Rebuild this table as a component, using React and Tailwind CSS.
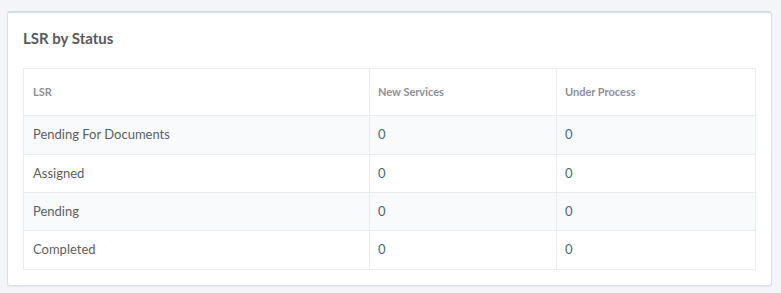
export default function App() {
  const rows = [
    ["Pending For Documents", "h-[39px] bg-[#f9fafb]"],
    ["Assigned", "h-[38px] bg-white"],
    ["Pending", "h-[38px] bg-[#f9fafb]"],
    ["Completed", "h-[39px] bg-white"],
  ];
  return (
    <div className="w-[781px] h-[293px] bg-[#f3f5f8] pt-[11px] pl-[7px] font-['Lato','Open_Sans',sans-serif]">
      <div className="w-[765px] h-[275px] bg-white rounded-[3px] border border-[#dde2e8] border-t-2 border-t-[#d2dae2] shadow-[0_1px_1px_rgba(0,0,0,0.05)] px-[15px]">
        <h2 className="h-[55px] pt-[15px] text-[15px] leading-[20px] font-bold text-[#565a60]">LSR by Status</h2>
        <table className="w-[732px] border-collapse table-fixed">
          <colgroup>
            <col className="w-[346px]" />
            <col className="w-[187px]" />
            <col className="w-[199px]" />
          </colgroup>
          <thead>
            <tr className="h-[47px]">
              <th className="border border-[#e9ecef] text-left pl-[9px] text-[11px] font-bold text-[#8b9099]">LSR</th>
              <th className="border border-[#e9ecef] text-left pl-[8px] text-[11px] font-bold text-[#8b9099]">New Services</th>
              <th className="border border-[#e9ecef] text-left pl-[8px] text-[11px] font-bold text-[#8b9099]">Under Process</th>
            </tr>
          </thead>
          <tbody>
            {rows.map(([r, cls]) => (
              <tr key={r} className={cls}>
                <td className="border border-[#e9ecef] pl-[9px] text-[13px] text-[#5b5f66]">{r}</td>
                <td className="border border-[#e9ecef] pl-[8px] text-[13px] text-[#4d6680]">0</td>
                <td className="border border-[#e9ecef] pl-[8px] text-[13px] text-[#4d6680]">0</td>
              </tr>
            ))}
          </tbody>
        </table>
      </div>
    </div>
  );
}
